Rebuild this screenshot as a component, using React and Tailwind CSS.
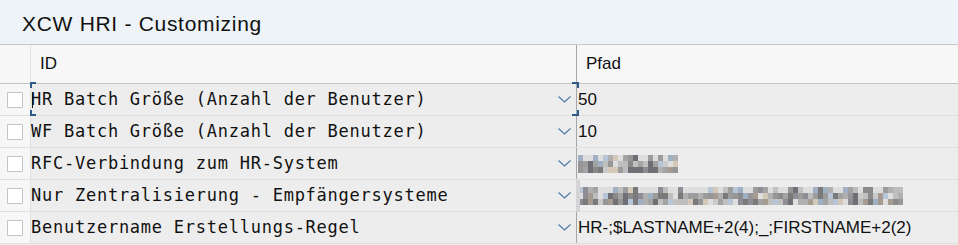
import React from 'react';

const rows = [
  { id: 'HR Batch Größe (Anzahl der Benutzer)', value: '50', focused: true },
  { id: 'WF Batch Größe (Anzahl der Benutzer)', value: '10' },
  { id: 'RFC-Verbindung zum HR-System', blur: { cols: 20, seed: 7 } },
  { id: 'Nur Zentralisierung - Empfängersysteme', blur: { cols: 65, seed: 19 }, handle: true },
  { id: 'Benutzername Erstellungs-Regel', value: 'HR-;$LASTNAME+2(4);_;FIRSTNAME+2(2)' },
];

const palette = [
  '#7a7a7a', '#8a8a8a', '#969696', '#a3a3a3', '#b0b0b0', '#bdbdbd', '#cacaca',
  '#6f6f75', '#9fb0c2', '#b7c6d6', '#d4c8b8', '#a59b90', '#dedede', '#8f8c96',
  '#c0c0c0', '#9c9c9c',
];

// pixelated (blurred) value, drawn as a grid of blocks
const Pixelated = ({ cols, seed }) => {
  let s = seed;
  const rnd = () => {
    s = (s * 9301 + 49297) % 233280;
    return s / 233280;
  };
  const rects = [];
  for (let r = 0; r < 3; r++) {
    for (let c = 0; c < cols; c++) {
      const color = r === 0 && rnd() < 0.35 ? '#dedede' : palette[Math.floor(rnd() * palette.length)];
      rects.push(<rect key={`${r}-${c}`} x={c * 5} y={r * 6} width="5" height="6" fill={color} />);
    }
  }
  return (
    <svg width={cols * 5} height="18">
      {rects}
    </svg>
  );
};

const Chevron = () => (
  <svg width="13" height="7" viewBox="0 0 13 7" className="shrink-0">
    <path d="M0.5 0.5 L6.5 6 L12.5 0.5" fill="none" stroke="#4a79a8" strokeWidth="1.1" />
  </svg>
);

const Checkbox = () => (
  <div className="w-[16px] h-[16px] bg-white border border-[#c4c4c4] rounded-[1px]" />
);

const Row = ({ row }) => (
  <div className="relative flex h-[32px] border-b border-[#e0e0e0] bg-[#ededed]">
    <div className="w-[31px] shrink-0 bg-[#f7f7f7] border-r border-[#e2e2e2] flex items-center pl-[7px]">
      <Checkbox />
    </div>
    <div className="w-[546px] shrink-0 flex items-center justify-between pr-[5px] border-r border-[#a6a6a6]">
      <span className="text-[17px] tracking-[0.75px] text-[#111] whitespace-nowrap" style={{ fontFamily: '"DejaVu Sans Mono", monospace' }}>
        {row.id}
      </span>
      <Chevron />
    </div>
    <div className="flex-1 flex items-center pl-[1px]">
      {row.blur ? (
        <Pixelated cols={row.blur.cols} seed={row.blur.seed} />
      ) : (
        <span className="text-[17px] text-[#111] whitespace-nowrap">{row.value}</span>
      )}
    </div>
    {row.handle && (
      <div className="absolute left-[576px] top-0 w-[4px] h-[33px] bg-[#d4d4d4]" />
    )}
    {row.focused && (
      <>
        <div className="absolute left-[30px] top-[-2px] w-[6px] h-[6px] border-l-2 border-t-2 border-[#2e5a88]" />
        <div className="absolute left-[30px] top-[26px] w-[6px] h-[6px] border-l-2 border-b-2 border-[#2e5a88]" />
        <div className="absolute left-[572px] top-[-2px] w-[7px] h-[6px] border-r-2 border-t-2 border-[#2e5a88]" />
        <div className="absolute left-[572px] top-[26px] w-[7px] h-[6px] border-r-2 border-b-2 border-[#2e5a88]" />
        <div className="absolute left-[32px] top-[9px] w-px h-[15px] bg-[#111]" />
      </>
    )}
  </div>
);

export default function App() {
  return (
    <div className="w-[958px] h-[245px] overflow-hidden bg-[#ededed]" style={{ fontFamily: '"Liberation Sans", Arial, sans-serif' }}>
      <div className="h-[45px] bg-[#eef3f8] border-b border-[#c8c8c8] flex items-center pl-[22px] pt-[3px]">
        <span className="text-[21px] tracking-[0.7px] text-[#111]">XCW HRI - Customizing</span>
      </div>
      <div className="flex h-[39px] bg-[#f7f7f7] border-b border-[#c4c4c4]">
        <div className="w-[31px] shrink-0 border-r border-[#e2e2e2]" />
        <div className="w-[546px] shrink-0 border-r border-[#a6a6a6] flex items-center pl-[9px] text-[17px] text-[#111]">
          ID
        </div>
        <div className="flex-1 flex items-center pl-[9px] text-[17px] text-[#111]">Pfad</div>
      </div>
      {rows.map((row, i) => (
        <Row key={i} row={row} />
      ))}
    </div>
  );
}
